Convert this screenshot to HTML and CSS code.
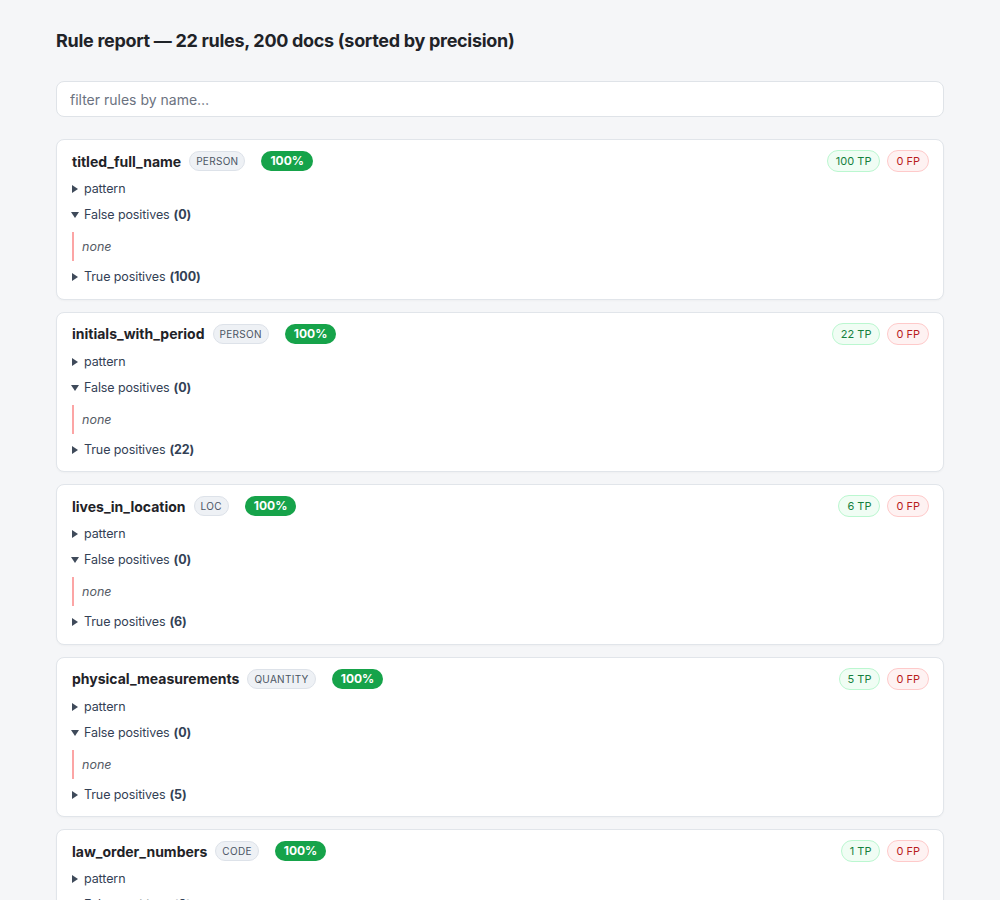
FILE: index.html
```html
<!DOCTYPE html>
<html lang="en">
<head>
    <meta charset="UTF-8">
    <meta name="viewport" content="width=device-width, initial-scale=1.0">
    <title>Rule report</title>
    <link rel="stylesheet" href="styles.css">
</head>
<body>
    <h1>Rule report — 22 rules, 200 docs (sorted by precision)</h1>
    <input class="filter" type="text" placeholder="filter rules by name…">

    <div class="rules">
        <div class="rule">
            <div class="rule-head">
                <span class="rule-name">titled_full_name</span>
                <span class="tag">PERSON</span>
                <span class="prec">100%</span>
                <span class="counts">
                    <span class="tp">100 TP</span>
                    <span class="fp">0 FP</span>
                </span>
            </div>
            <details><summary>pattern</summary></details>
            <details open>
                <summary>False positives <b>(0)</b></summary>
                <div class="examples"><i>none</i></div>
            </details>
            <details><summary>True positives <b>(100)</b></summary></details>
        </div>

        <div class="rule">
            <div class="rule-head">
                <span class="rule-name">initials_with_period</span>
                <span class="tag">PERSON</span>
                <span class="prec">100%</span>
                <span class="counts">
                    <span class="tp">22 TP</span>
                    <span class="fp">0 FP</span>
                </span>
            </div>
            <details><summary>pattern</summary></details>
            <details open>
                <summary>False positives <b>(0)</b></summary>
                <div class="examples"><i>none</i></div>
            </details>
            <details><summary>True positives <b>(22)</b></summary></details>
        </div>

        <div class="rule">
            <div class="rule-head">
                <span class="rule-name">lives_in_location</span>
                <span class="tag">LOC</span>
                <span class="prec">100%</span>
                <span class="counts">
                    <span class="tp">6 TP</span>
                    <span class="fp">0 FP</span>
                </span>
            </div>
            <details><summary>pattern</summary></details>
            <details open>
                <summary>False positives <b>(0)</b></summary>
                <div class="examples"><i>none</i></div>
            </details>
            <details><summary>True positives <b>(6)</b></summary></details>
        </div>

        <div class="rule">
            <div class="rule-head">
                <span class="rule-name">physical_measurements</span>
                <span class="tag">QUANTITY</span>
                <span class="prec">100%</span>
                <span class="counts">
                    <span class="tp">5 TP</span>
                    <span class="fp">0 FP</span>
                </span>
            </div>
            <details><summary>pattern</summary></details>
            <details open>
                <summary>False positives <b>(0)</b></summary>
                <div class="examples"><i>none</i></div>
            </details>
            <details><summary>True positives <b>(5)</b></summary></details>
        </div>

        <div class="rule">
            <div class="rule-head">
                <span class="rule-name">law_order_numbers</span>
                <span class="tag">CODE</span>
                <span class="prec">100%</span>
                <span class="counts">
                    <span class="tp">1 TP</span>
                    <span class="fp">0 FP</span>
                </span>
            </div>
            <details><summary>pattern</summary></details>
            <details open>
                <summary>False positives <b>(0)</b></summary>
                <div class="examples"><i>none</i></div>
            </details>
            <details><summary>True positives <b>(1)</b></summary></details>
        </div>
    </div>
</body>
</html>
```

FILE: styles.css
```css
* {
    margin: 0;
    padding: 0;
    box-sizing: border-box;
}
body {
    font-family: Inter, 'Noto Sans', Arial, sans-serif;
    background: #f5f6f8;
    color: #1f2328;
    padding: 29px 56px 40px;
}
h1 {
    font-size: 18px;
    font-weight: 700;
    line-height: 24px;
    letter-spacing: -0.3px;
    margin-bottom: 28px;
}
.filter {
    display: block;
    width: 100%;
    height: 36px;
    padding: 0 13px;
    font-family: inherit;
    font-size: 14px;
    color: #1f2328;
    background: #fff;
    border: 1px solid #dfe3e8;
    border-radius: 8px;
    margin-bottom: 22px;
    outline: none;
}
.filter::placeholder {
    color: #6b7280;
}
.rules {
    display: flex;
    flex-direction: column;
    gap: 12px;
}
.rule {
    background: #fff;
    border: 1px solid #e1e5ea;
    border-radius: 8px;
    padding: 11px 14px 11.5px 15px;
    box-shadow: 0 1px 2px rgba(0, 0, 0, 0.03);
}
.rule-head {
    display: flex;
    align-items: center;
    gap: 8px;
    height: 20px;
    margin-bottom: 8px;
}
.rule-name {
    font-size: 14px;
    font-weight: 700;
    color: #1f2328;
}
.tag {
    font-size: 10px;
    letter-spacing: 0.3px;
    color: #4b5563;
    background: #eef1f5;
    border: 1px solid #dde2e9;
    border-radius: 10px;
    padding: 2px 6px;
    line-height: 14px;
}
.prec {
    margin-left: 8px;
    font-size: 12px;
    font-weight: 700;
    color: #fff;
    background: #16a34a;
    border-radius: 10px;
    padding: 0 9px;
    line-height: 20px;
}
.counts {
    margin-left: auto;
    display: flex;
    gap: 7px;
}
.tp, .fp {
    font-size: 11px;
    line-height: 18px;
    padding: 1px 8px;
    border-radius: 11px;
    border: 1px solid;
}
.tp {
    color: #15803d;
    background: #f0fdf4;
    border-color: #bbf7d0;
}
.fp {
    color: #b91c1c;
    background: #fef2f2;
    border-color: #fecaca;
}
details + details {
    margin-top: 6px;
}
summary {
    list-style: none;
    cursor: pointer;
    font-size: 12.5px;
    letter-spacing: -0.1px;
    line-height: 20px;
    color: #334155;
    display: flex;
    align-items: center;
}
summary::-webkit-details-marker {
    display: none;
}
summary::before {
    content: "";
    width: 0;
    height: 0;
    border-top: 4px solid transparent;
    border-bottom: 4px solid transparent;
    border-left: 6px solid #3f4a5a;
    margin-right: 6px;
}
details[open] > summary::before {
    border-left: 4px solid transparent;
    border-right: 4px solid transparent;
    border-top: 6px solid #3f4a5a;
    border-bottom: 0;
    margin-right: 5px;
    margin-left: -1px;
}
summary b {
    font-weight: 700;
    margin-left: 4px;
}
.examples {
    margin-top: 7px;
    border-left: 2px solid #fca5a5;
    padding: 6px 8px;
    line-height: 17px;
    font-size: 12.5px;
    color: #555b65;
}
```
